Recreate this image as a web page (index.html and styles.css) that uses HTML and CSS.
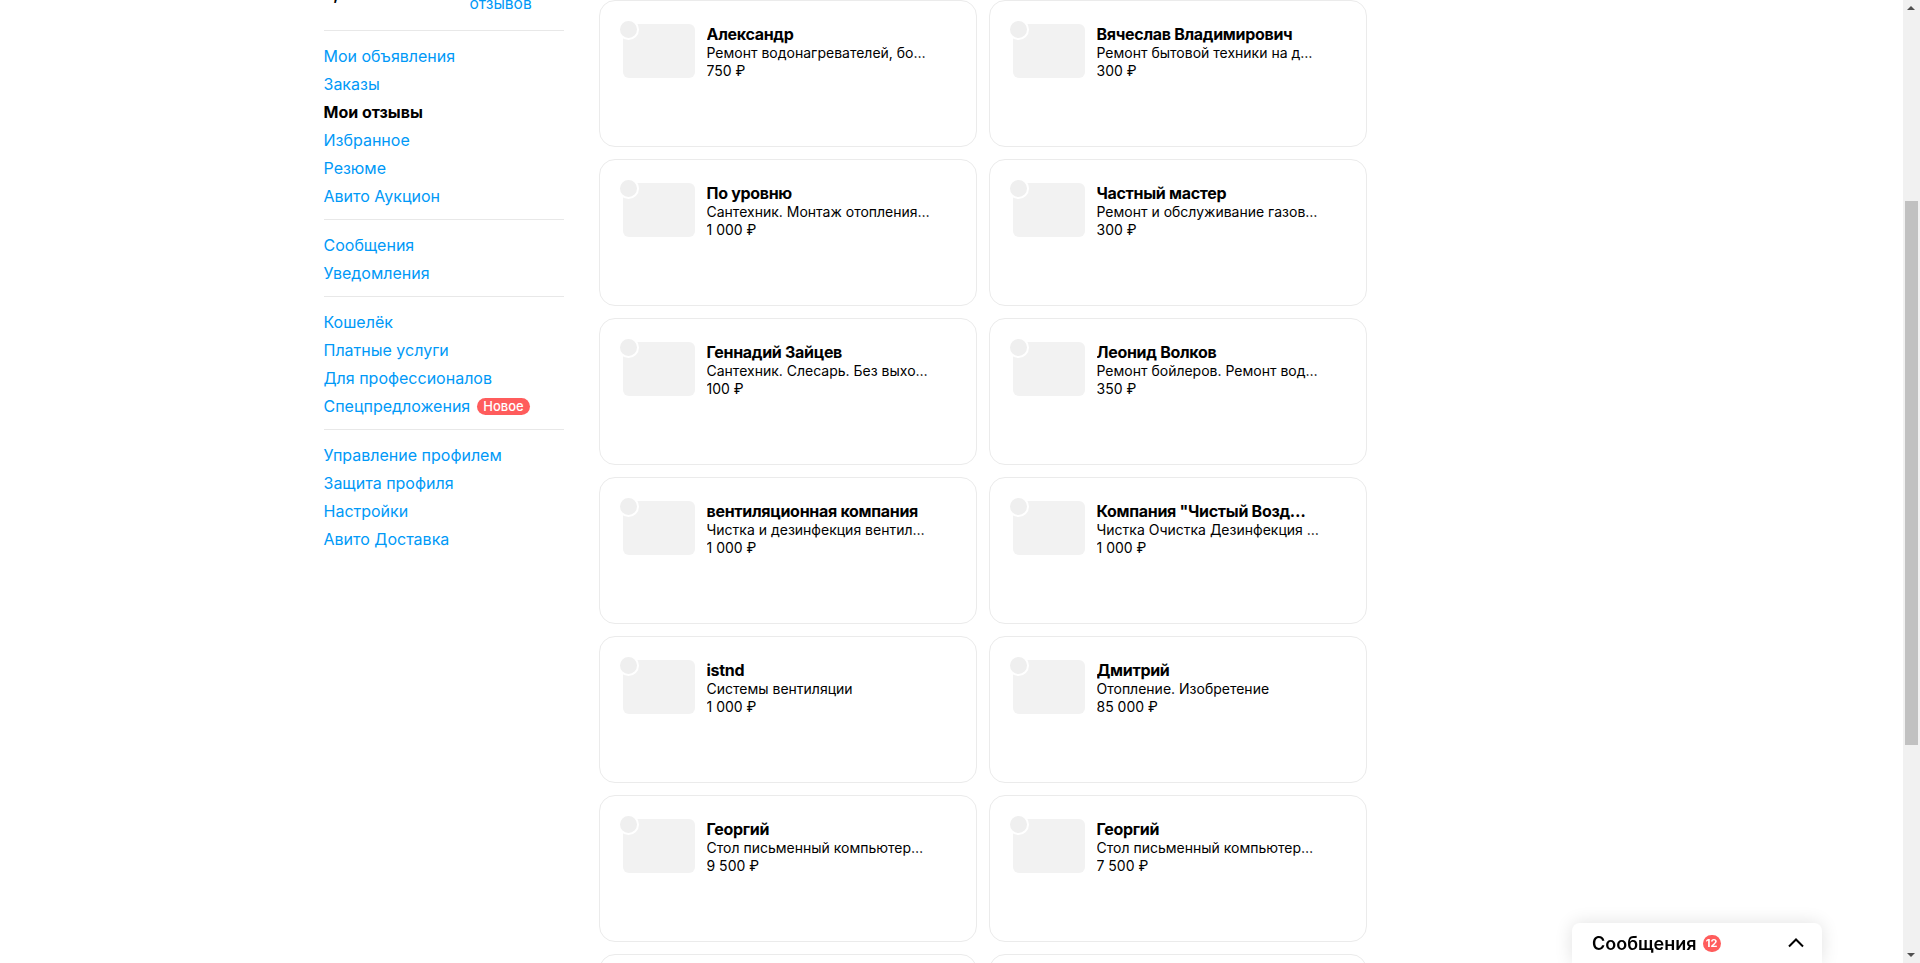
FILE: index.html
```html
<!DOCTYPE html>
<html lang="ru">
<head>
    <meta charset="UTF-8">
    <meta name="viewport" content="width=device-width, initial-scale=1.0">
    <title>Мои отзывы — Авито</title>
    <link rel="stylesheet" href="styles.css">
</head>
<body>

<header class="site-header">
    <div class="site-header-inner">
        <a class="logo" href="#">Авито</a>
        <div class="search">Поиск по объявлениям</div>
        <a class="header-link" href="#">Разместить объявление</a>
    </div>
</header>

<div class="layout">
    <aside class="sidebar">
        <div class="profile">
            <div class="profile-avatar">А</div>
            <div class="profile-name">Андрей</div>
            <div class="profile-since">На Авито с 2019 года</div>
            <div class="profile-rating">
                <span class="rating-value">5,0</span>
                <span class="rating-stars">★★★★★</span>
                <a class="rating-link" href="#"><span>27</span><span>отзывов</span></a>
            </div>
        </div>

        <nav class="side-menu">
            <ul class="menu-group">
                <li><a href="#">Мои объявления</a></li>
                <li><a href="#">Заказы</a></li>
                <li><a class="active" href="#">Мои отзывы</a></li>
                <li><a href="#">Избранное</a></li>
                <li><a href="#">Резюме</a></li>
                <li><a href="#">Авито Аукцион</a></li>
            </ul>
            <ul class="menu-group">
                <li><a href="#">Сообщения</a></li>
                <li><a href="#">Уведомления</a></li>
            </ul>
            <ul class="menu-group">
                <li><a href="#">Кошелёк</a></li>
                <li><a href="#">Платные услуги</a></li>
                <li><a href="#">Для профессионалов</a></li>
                <li><a href="#">Спецпредложения</a><span class="badge-new">Новое</span></li>
            </ul>
            <ul class="menu-group">
                <li><a href="#">Управление профилем</a></li>
                <li><a href="#">Защита профиля</a></li>
                <li><a href="#">Настройки</a></li>
                <li><a href="#">Авито Доставка</a></li>
            </ul>
        </nav>
    </aside>

    <main class="content">
        <h1>Мои отзывы</h1>
        <div class="tabs">
            <a class="tab tab-active" href="#">Ожидают оценки</a>
            <a class="tab" href="#">Оставленные</a>
            <a class="tab" href="#">Полученные</a>
        </div>
        <h2>Выберите, кому оставить отзыв</h2>
        <div class="offers" id="offers"></div>
    </main>
</div>

<div class="messenger">
    <span class="messenger-title">Сообщения</span>
    <span class="messenger-count">12</span>
    <svg class="messenger-toggle" width="24" height="24" viewBox="0 0 24 24">
        <path d="M5 15.5l7-7 7 7" fill="none" stroke="#000" stroke-width="2"/>
    </svg>
</div>

<div class="scrollbar">
    <span class="scroll-arrow scroll-up"></span>
    <span class="scroll-thumb" id="scroll-thumb"></span>
    <span class="scroll-arrow scroll-down"></span>
</div>

<script src="script.js"></script>
</body>
</html>
```

FILE: styles.css
```css
body {
    font-family: Inter, "Noto Sans", Arial, sans-serif;
    margin: 0 17px 0 0;
    padding: 0;
    background-color: #fff;
    color: #000;
}

a {
    text-decoration: none;
}

/* шапка */
.site-header {
    height: 112px;
    border-bottom: 1px solid #f0f0f0;
    box-sizing: border-box;
}

.site-header-inner {
    max-width: 1256px;
    margin: 0 auto;
    height: 100%;
    display: flex;
    align-items: center;
    gap: 24px;
}

.logo {
    font-size: 28px;
    font-weight: 800;
    color: #000;
}

.search {
    flex-grow: 1;
    height: 44px;
    border: 2px solid #00aaff;
    border-radius: 12px;
    display: flex;
    align-items: center;
    padding: 0 16px;
    color: #999;
    font-size: 15px;
}

.header-link {
    color: #0099f7;
    font-size: 15px;
}

.layout {
    max-width: 1256px;
    margin: 0 auto;
    padding: 24px 0 58px;
    display: grid;
    grid-template-columns: 240px 1fr;
    column-gap: 35px;
}

/* левая колонка */
.profile {
    padding-bottom: 16px;
}

.profile-avatar {
    width: 72px;
    height: 72px;
    border-radius: 50%;
    background: #e6f4ff;
    color: #0099f7;
    font-size: 28px;
    font-weight: 700;
    display: flex;
    align-items: center;
    justify-content: center;
    margin-bottom: 12px;
}

.profile-name {
    font-size: 20px;
    font-weight: 700;
    line-height: 28px;
    margin-bottom: 4px;
}

.profile-since {
    font-size: 14px;
    line-height: 20px;
    color: #757575;
    margin-bottom: 28px;
}

.profile-rating {
    display: flex;
    align-items: center;
    height: 40px;
}

.rating-value {
    font-size: 16px;
    font-weight: 700;
    line-height: 20px;
    margin-right: 6px;
}

.rating-stars {
    color: #ffb021;
    font-size: 16px;
    letter-spacing: 1px;
    line-height: 20px;
}

.rating-link {
    margin-left: auto;
    width: 94px;
    display: flex;
    flex-direction: column;
    color: #0099f7;
    font-size: 15.5px;
    line-height: 20px;
}

.side-menu {
    font-size: 16px;
}

.menu-group {
    list-style-type: none;
    margin: 0;
    padding: 11px 0 9px;
    border-top: 1px solid #e8e8e8;
}

.menu-group li {
    display: flex;
    align-items: center;
    line-height: 28px;
}

.menu-group a {
    color: #0099f7;
}

.menu-group a.active {
    color: #000;
    font-weight: 700;
}

.badge-new {
    margin-left: 7px;
    background: #ff5c5c;
    color: white;
    font-size: 13px;
    font-weight: 500;
    line-height: 17px;
    padding: 0 6px;
    border-radius: 9px;
}

/* правая колонка */
.content h1 {
    font-size: 32px;
    line-height: 40px;
    margin: 0 0 24px;
}

.tabs {
    display: flex;
    gap: 8px;
    height: 40px;
    margin-bottom: 32px;
}

.tab {
    display: flex;
    align-items: center;
    padding: 0 16px;
    border-radius: 12px;
    background: #f2f2f2;
    color: #000;
    font-size: 15px;
}

.tab-active {
    background: #000;
    color: #fff;
}

.content h2 {
    font-size: 20px;
    line-height: 28px;
    margin: 0 0 26px;
}

.offers {
    display: grid;
    grid-template-columns: repeat(2, 378px);
    gap: 12px;
}

.offer-card {
    box-sizing: border-box;
    height: 147px;
    border: 1px solid #ebebeb;
    border-radius: 16px;
    padding: 23px;
    display: flex;
    gap: 12px;
}

.offer-photo {
    position: relative;
    flex-shrink: 0;
    width: 72px;
    height: 54px;
    border-radius: 6px;
    background: #f2f2f2;
}

.offer-check {
    position: absolute;
    left: -5px;
    top: -5px;
    width: 17px;
    height: 17px;
    border: 2px solid #fff;
    border-radius: 50%;
    background: #efefef;
}

.offer-info {
    width: 224px;
}

.offer-info div {
    white-space: nowrap;
    overflow: hidden;
    text-overflow: ellipsis;
}

.offer-seller {
    max-width: 217px;
    font-size: 16px;
    font-weight: 700;
    line-height: 20px;
    letter-spacing: -0.3px;
}

.offer-title,
.offer-price {
    font-size: 14px;
    line-height: 18px;
}

/* мессенджер внизу */
.messenger {
    position: fixed;
    right: 98px;
    bottom: 0;
    width: 250px;
    height: 40px;
    box-sizing: border-box;
    padding: 0 14px 0 20px;
    background: #fff;
    border-radius: 8px 8px 0 0;
    box-shadow: 0 0 18px rgba(0, 0, 0, 0.12);
    display: flex;
    align-items: center;
}

.messenger-title {
    font-size: 18px;
    font-weight: 600;
}

.messenger-count {
    margin-left: 6px;
    min-width: 12px;
    height: 17px;
    padding: 0 3px;
    border-radius: 9px;
    background: #ff5c5c;
    color: #fff;
    font-size: 11px;
    font-weight: 700;
    line-height: 17px;
    text-align: center;
}

.messenger-toggle {
    margin-left: auto;
}

/* полоса прокрутки */
.scrollbar {
    position: fixed;
    top: 0;
    right: 0;
    width: 17px;
    height: 100%;
    background: #f1f1f1;
}

.scroll-thumb {
    position: absolute;
    left: 2px;
    width: 13px;
    background: #c1c1c1;
}

.scroll-arrow {
    position: absolute;
    left: 4px;
    border-left: 4.5px solid transparent;
    border-right: 4.5px solid transparent;
}

.scroll-up {
    top: 6px;
    border-bottom: 4px solid #505050;
}

.scroll-down {
    bottom: 6px;
    border-top: 4px solid #505050;
}
```

FILE: script.js
```js
const offers = [
    { seller: "Александр", title: "Ремонт водонагревателей, бойлеров", price: "750 ₽" },
    { seller: "Вячеслав Владимирович", title: "Ремонт бытовой техники на дому", price: "300 ₽" },
    { seller: "По уровню", title: "Сантехник. Монтаж отопления, водоснабжения", price: "1 000 ₽" },
    { seller: "Частный мастер", title: "Ремонт и обслуживание газовых котлов", price: "300 ₽" },
    { seller: "Геннадий Зайцев", title: "Сантехник. Слесарь. Без выходных", price: "100 ₽" },
    { seller: "Леонид Волков", title: "Ремонт бойлеров. Ремонт водонагревателей", price: "350 ₽" },
    { seller: "вентиляционная компания", title: "Чистка и дезинфекция вентиляции", price: "1 000 ₽" },
    { seller: "Компания \"Чистый Воздух\"", title: "Чистка Очистка Дезинфекция вентиляции", price: "1 000 ₽" },
    { seller: "istnd", title: "Системы вентиляции", price: "1 000 ₽" },
    { seller: "Дмитрий", title: "Отопление. Изобретение", price: "85 000 ₽" },
    { seller: "Георгий", title: "Стол письменный компьютерный", price: "9 500 ₽" },
    { seller: "Георгий", title: "Стол письменный компьютерный", price: "7 500 ₽" },
    { seller: "Ирина", title: "Кресло офисное на колёсиках", price: "2 000 ₽" },
    { seller: "Сергей", title: "Установка стиральных машин", price: "500 ₽" },
    { seller: "Мастер на час", title: "Мелкий бытовой ремонт", price: "800 ₽" },
    { seller: "Ольга", title: "Шкаф-купе двухстворчатый", price: "6 000 ₽" }
];

function renderOffers() {
    const list = document.getElementById("offers");
    list.innerHTML = "";

    offers.forEach(offer => {
        let card = document.createElement("div");
        card.className = "offer-card";
        card.innerHTML = `
            <div class="offer-photo"><span class="offer-check"></span></div>
            <div class="offer-info">
                <div class="offer-seller">${offer.seller}</div>
                <div class="offer-title">${offer.title}</div>
                <div class="offer-price">${offer.price}</div>
            </div>
        `;
        list.appendChild(card);
    });
}

// ползунок считается от высоты страницы и текущей прокрутки
function updateScrollThumb() {
    const thumb = document.getElementById("scroll-thumb");
    const pageHeight = document.documentElement.scrollHeight;
    const track = window.innerHeight - 34;
    thumb.style.height = (track * window.innerHeight / pageHeight) + "px";
    thumb.style.top = (17 + track * window.scrollY / pageHeight) + "px";
}

renderOffers();
window.scrollTo(0, 326);
updateScrollThumb();
window.addEventListener("scroll", updateScrollThumb);
```
